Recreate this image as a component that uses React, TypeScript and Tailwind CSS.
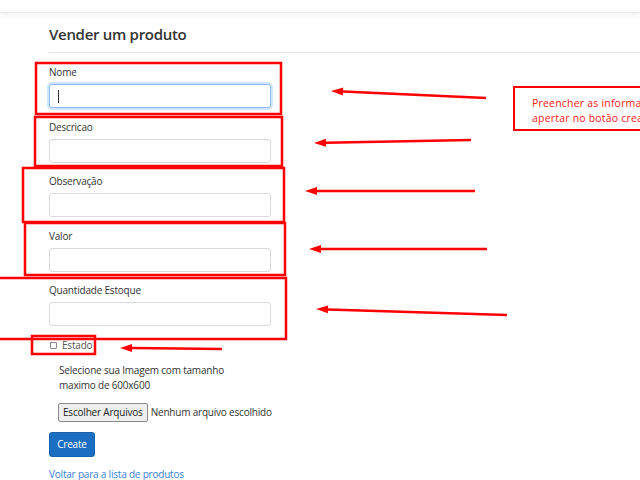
import React from "react";

const fields = ["Nome", "Descricao", "Observação", "Valor", "Quantidade Estoque"];

// red highlight boxes drawn over the page: [x, y, w, h]
const boxes: [number, number, number, number][] = [
  [36, 63, 245, 51],
  [35, 117, 247, 49],
  [23, 168, 261, 54],
  [25, 223, 260, 52],
  [-10, 278, 296, 61],
  [32, 336, 63, 18],
];

// arrows: tail -> head
const arrows: [number, number, number, number][] = [
  [486, 98, 331, 91],
  [471, 140, 314, 143],
  [475, 191, 305, 191],
  [487, 249, 309, 249],
  [507, 315, 316, 309],
  [222, 349, 120, 348],
];

function Arrow({ t }: { t: [number, number, number, number] }) {
  const [x1, y1, x2, y2] = t;
  const dx = x2 - x1;
  const dy = y2 - y1;
  const len = Math.hypot(dx, dy);
  const ux = dx / len;
  const uy = dy / len;
  const hl = 12;
  const hw = 4;
  const bx = x2 - ux * hl;
  const by = y2 - uy * hl;
  const pts = `${x2},${y2} ${bx - uy * hw},${by + ux * hw} ${bx + uy * hw},${by - ux * hw}`;
  return (
    <g>
      <line x1={x1} y1={y1} x2={bx} y2={by} stroke="#ff0000" strokeWidth={2.5} />
      <polygon points={pts} fill="#ff0000" />
    </g>
  );
}

export default function App() {
  return (
    <div className="relative h-[480px] w-[640px] overflow-hidden bg-white font-['Open_Sans',sans-serif] text-[#212529]">
      <header className="h-[13px] border-b border-[#e9e9e9] bg-white shadow-[0_2px_6px_rgba(0,0,0,0.06)]" />

      <main className="pl-[49px] tracking-[-0.2px]">
        <h4 className="mt-[11px] text-[15px] font-semibold leading-[20px] tracking-[-0.3px] text-[#333]">
          Vender um produto
        </h4>
        <hr className="mt-[8px] border-t border-[#e6e6e6]" />

        <form className="mt-[12px] flex w-[222px] flex-col gap-[11.5px]">
          {fields.map((f, i) => (
            <div key={f} className="flex flex-col">
              <label className="mb-[5px] text-[10px] leading-[14px] text-[#333]">{f}</label>
              <div
                className={
                  i === 0
                    ? "flex h-[24px] items-center rounded-[3px] border border-[#86b7fe] bg-white pl-[8px] shadow-[0_0_0_2px_rgba(13,110,253,0.18)]"
                    : "h-[24px] rounded-[3px] border border-[#d6dadf] bg-white"
                }
              >
                {i === 0 ? <span className="h-[13px] w-px bg-[#333]" /> : null}
              </div>
            </div>
          ))}
        </form>

        <div className="mt-[12px] flex items-center gap-[5px] pl-[1px]">
          <span className="h-[7px] w-[7px] rounded-[1px] border border-[#888] bg-white" />
          <span className="text-[10px] leading-[14px] text-[#555]">Estado</span>
        </div>

        <p className="mt-[11px] w-[180px] pl-[10px] text-[10px] leading-[15px] text-[#333]">
          Selecione sua Imagem com tamanho maximo de 600x600
        </p>

        <div className="mt-[10px] flex items-center gap-[3px] pl-[9px] text-[10px] text-[#333]">
          <button
            type="button"
            className="h-[19px] rounded-[2px] border border-[#8a8a8a] bg-[#efefef] px-[4px] text-[10px] leading-[17px] tracking-[-0.2px] text-[#222]"
          >
            Escolher Arquivos
          </button>
          <span>Nenhum arquivo escolhido</span>
        </div>

        <button
          type="button"
          className="mt-[10px] h-[25px] w-[46px] rounded-[3px] border border-[#1861ac] bg-[#1b6ec2] text-[10px] text-white"
        >
          Create
        </button>

        <a href="#" className="mt-[10px] block text-[10px] leading-[14px] text-[#3a7fd5]">
          Voltar para a lista de produtos
        </a>
      </main>

      {/* annotation overlay */}
      <svg className="pointer-events-none absolute left-0 top-0" width={640} height={480}>
        {boxes.map(([x, y, w, h], i) => (
          <rect key={i} x={x} y={y} width={w} height={h} fill="none" stroke="#ff0000" strokeWidth={2.5} />
        ))}
        {arrows.map((a, i) => (
          <Arrow key={i} t={a} />
        ))}
      </svg>

      <div className="absolute left-[513px] top-[86px] h-[45px] w-[200px] border-[2.5px] border-[#ff0000] bg-white pl-[17px] pt-[8px] text-[10.5px] leading-[15px] tracking-[0.2px] text-[#ff2020]">
        <p className="whitespace-nowrap">Preencher as informações e</p>
        <p className="whitespace-nowrap">apertar no botão create</p>
      </div>
    </div>
  );
}
